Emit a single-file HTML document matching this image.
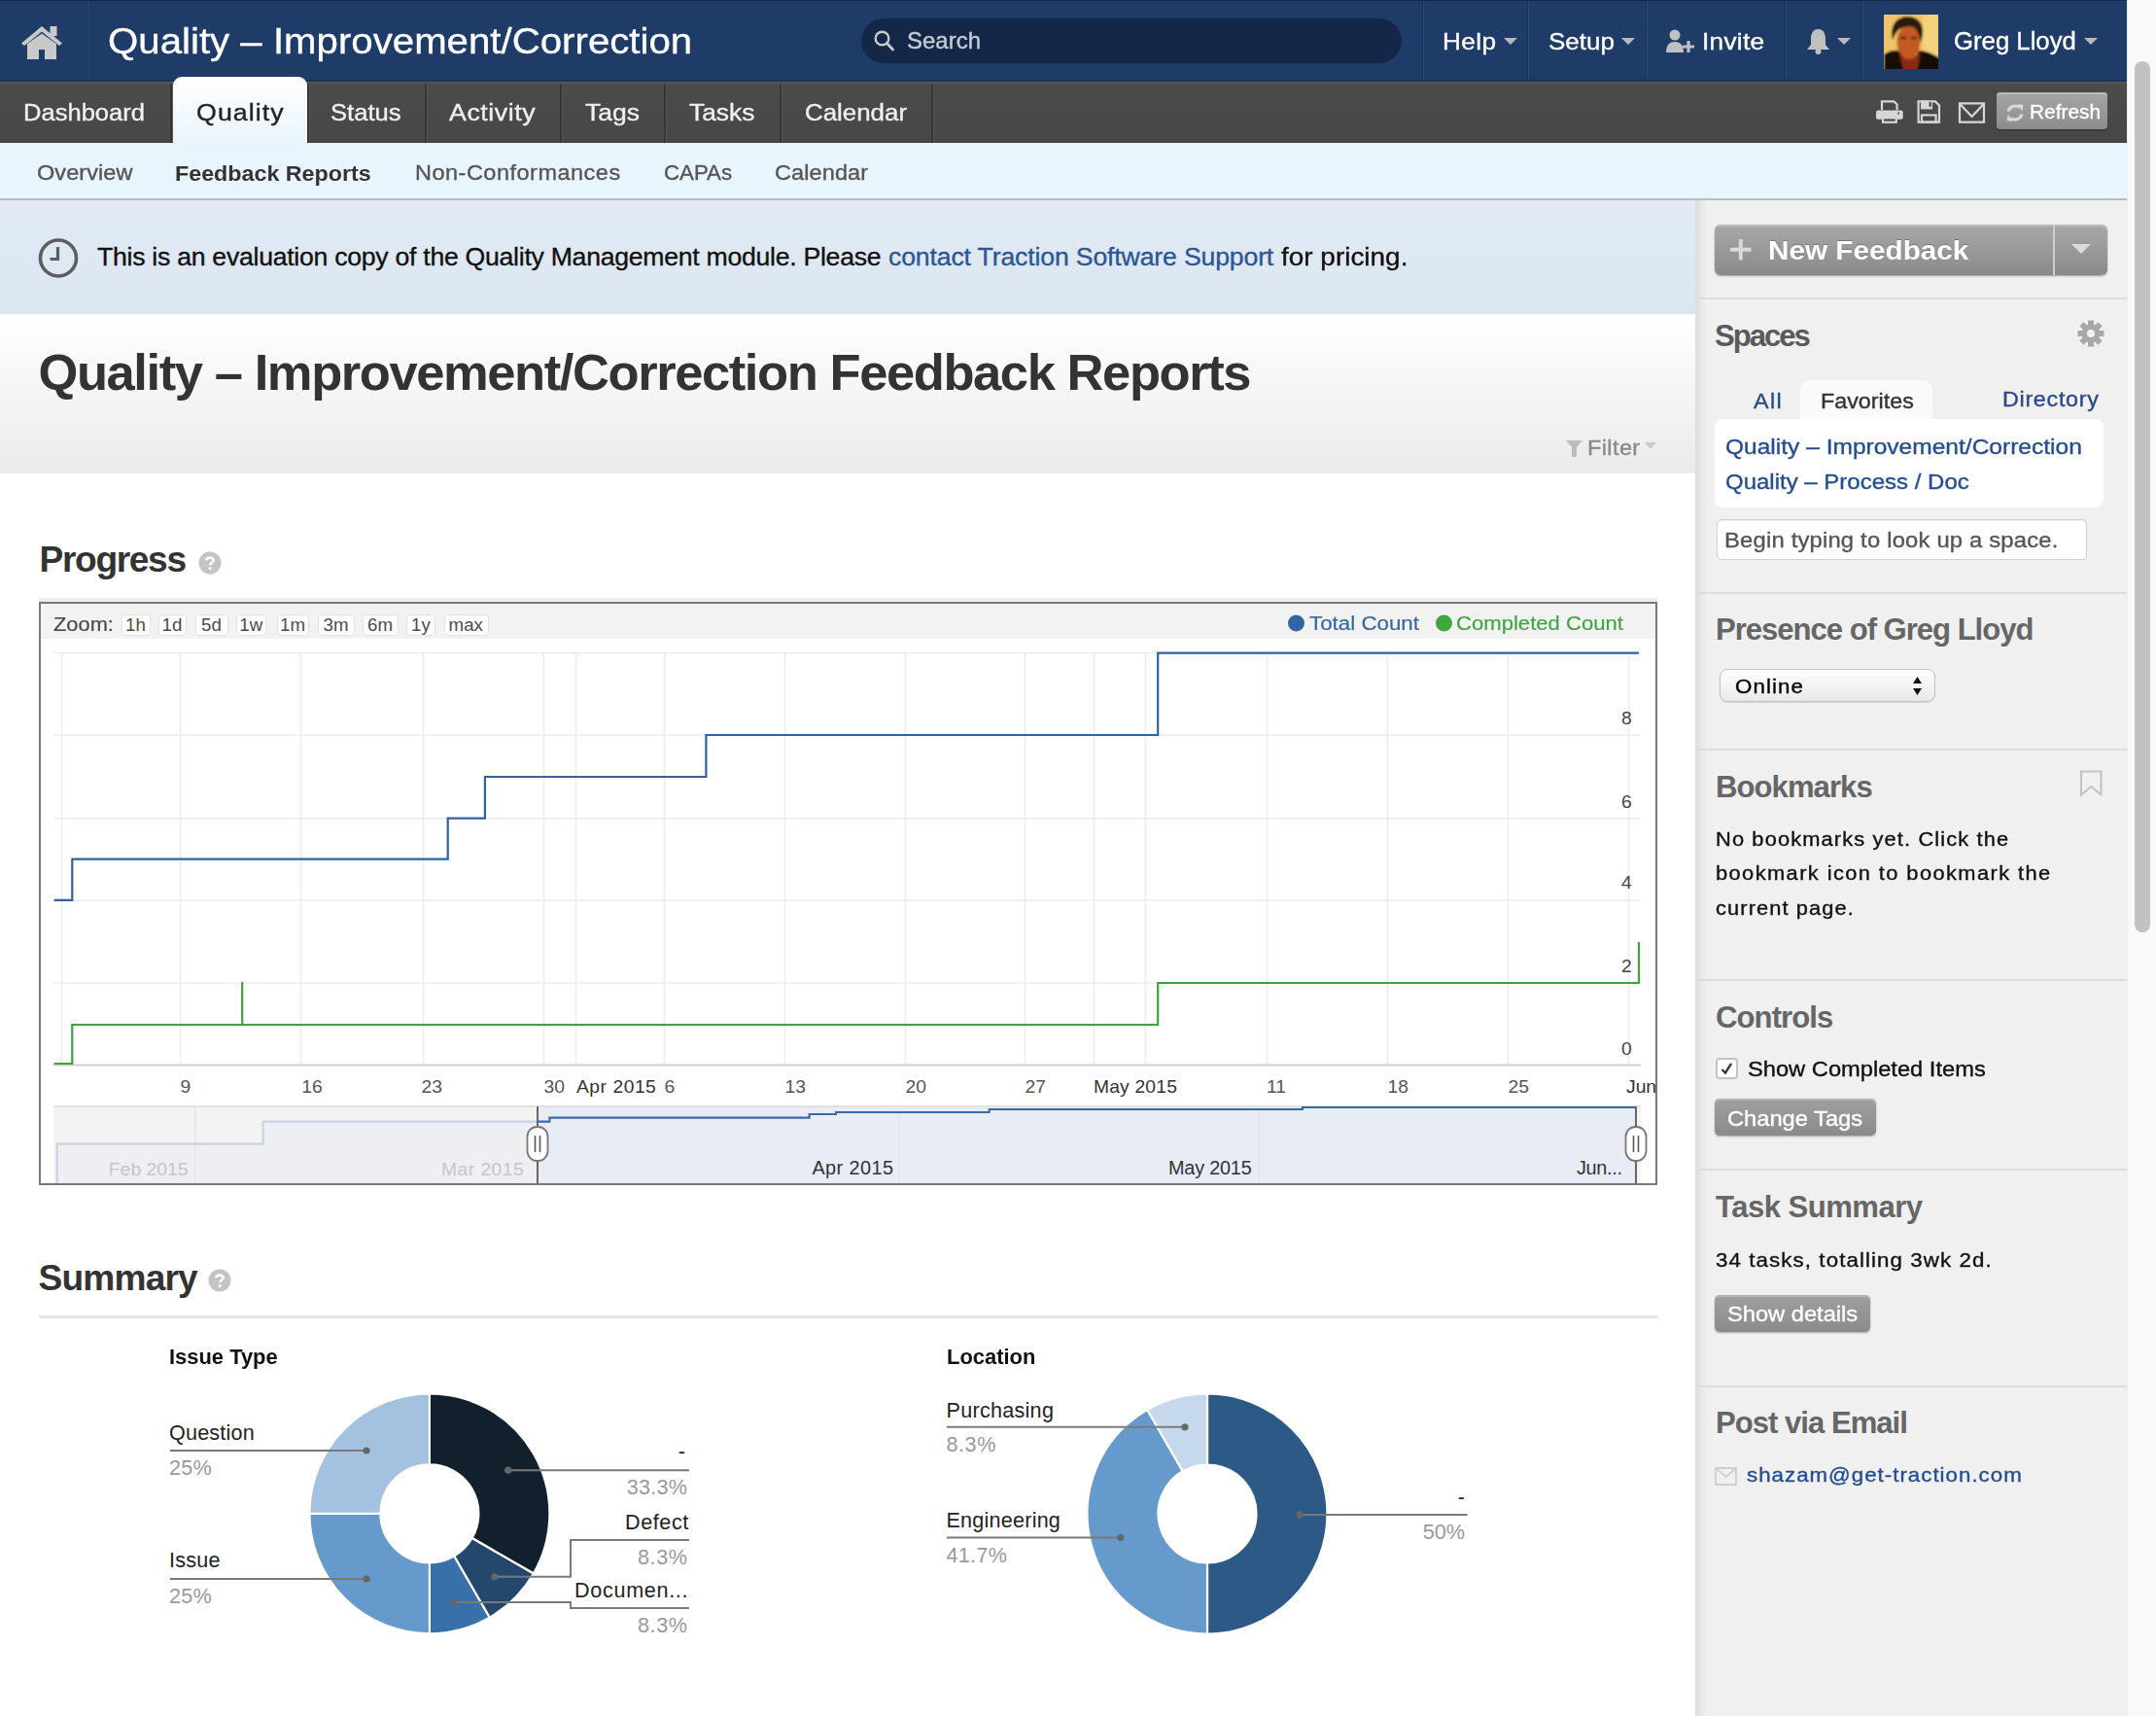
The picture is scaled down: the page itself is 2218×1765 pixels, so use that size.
<!DOCTYPE html><html><head><meta charset="utf-8"><style>
html,body{margin:0;padding:0}
body{width:2218px;height:1765px;overflow:hidden;position:relative;background:#fff;font-family:"Liberation Sans",sans-serif}
.t{position:absolute;white-space:nowrap;-webkit-text-stroke:0.35px currentColor}
.b{-webkit-text-stroke:0}
.r{position:absolute}
svg{position:absolute}
</style></head><body>
<div class="r" style="left:2188px;top:0px;width:30px;height:1765px;background:#f9f9f9;border-left:1px solid #ececec;box-sizing:border-box"></div>
<div class="r" style="left:2196px;top:63px;width:16px;height:896px;background:#c2c2c2;border-radius:8px"></div>
<div class="r" style="left:0px;top:0px;width:2188px;height:84px;background:#1f3c69;border-top:1px solid #13284a;border-bottom:2px solid #1a3359;box-sizing:border-box"></div>
<div class="r" style="left:89px;top:2px;width:1px;height:80px;background:#18305a"></div>
<div class="r" style="left:90px;top:2px;width:1px;height:80px;background:#2a4c80"></div>
<div class="r" style="left:1463px;top:2px;width:1px;height:80px;background:#18305a"></div>
<div class="r" style="left:1464px;top:2px;width:1px;height:80px;background:#2a4c80"></div>
<div class="r" style="left:1571px;top:2px;width:1px;height:80px;background:#18305a"></div>
<div class="r" style="left:1572px;top:2px;width:1px;height:80px;background:#2a4c80"></div>
<div class="r" style="left:1693px;top:2px;width:1px;height:80px;background:#18305a"></div>
<div class="r" style="left:1694px;top:2px;width:1px;height:80px;background:#2a4c80"></div>
<div class="r" style="left:1836px;top:2px;width:1px;height:80px;background:#18305a"></div>
<div class="r" style="left:1837px;top:2px;width:1px;height:80px;background:#2a4c80"></div>
<div class="r" style="left:1915px;top:2px;width:1px;height:80px;background:#18305a"></div>
<div class="r" style="left:1916px;top:2px;width:1px;height:80px;background:#2a4c80"></div>
<svg style="left:0;top:0" width="100" height="84" viewBox="0 0 100 84">
<path d="M22 44.5 L43 27 L64 44.5 L61 47 L43 32.5 L25 47 Z" fill="#c9c9c9"/>
<rect x="51.5" y="27" width="7" height="10" fill="#c9c9c9"/>
<path d="M28 45 L43 34.5 L58 45 L58 61 L46 61 L46 51 L40 51 L40 61 L28 61 Z" fill="#c9c9c9"/>
</svg>
<div class="t" style="left:111.0px;top:24.7px;font-size:36.52px;line-height:36.52px;letter-spacing:0.02px;color:#fff;transform:scaleX(1.1000);transform-origin:0 0;">Quality – Improvement/Correction</div>
<div class="r" style="left:886px;top:19px;width:556px;height:46px;background:#152748;border-radius:23px"></div>
<svg style="left:890px;top:25px" width="40" height="40" viewBox="0 0 40 40">
<circle cx="17.5" cy="14.5" r="6.8" fill="none" stroke="#c8c8c8" stroke-width="2.4"/>
<path d="M22.5 19.5 L28.5 26" stroke="#c8c8c8" stroke-width="2.8" stroke-linecap="round"/>
</svg>
<div class="t" style="left:933.0px;top:31.2px;font-size:22.99px;line-height:22.99px;letter-spacing:0.00px;color:#c7cdd6;transform:scaleX(1.0432);transform-origin:0 0;">Search</div>
<div class="t" style="left:1484.0px;top:31.0px;font-size:23.80px;line-height:23.80px;letter-spacing:0.35px;color:#fff;transform:scaleX(1.1000);transform-origin:0 0;">Help</div>
<div class="t" style="left:1593.0px;top:31.0px;font-size:23.80px;line-height:23.80px;letter-spacing:0.00px;color:#fff;transform:scaleX(1.0932);transform-origin:0 0;">Setup</div>
<div class="t" style="left:1751.0px;top:31.0px;font-size:23.80px;line-height:23.80px;letter-spacing:0.26px;color:#fff;transform:scaleX(1.1000);transform-origin:0 0;">Invite</div>
<div class="t" style="left:2010.0px;top:29.8px;font-size:25.43px;line-height:25.43px;letter-spacing:0.00px;color:#fff;transform:scaleX(1.0120);transform-origin:0 0;">Greg Lloyd</div>
<svg style="left:1547px;top:39px" width="14" height="7" viewBox="0 0 14 7"><path d="M0 0 L14 0 L7.0 7 Z" fill="#b9b9b9"/></svg>
<svg style="left:1668px;top:39px" width="14" height="7" viewBox="0 0 14 7"><path d="M0 0 L14 0 L7.0 7 Z" fill="#b9b9b9"/></svg>
<svg style="left:1890px;top:39px" width="14" height="7" viewBox="0 0 14 7"><path d="M0 0 L14 0 L7.0 7 Z" fill="#b9b9b9"/></svg>
<svg style="left:2144px;top:39px" width="14" height="7" viewBox="0 0 14 7"><path d="M0 0 L14 0 L7.0 7 Z" fill="#b9b9b9"/></svg>
<svg style="left:1712px;top:28px" width="34" height="28" viewBox="0 0 34 28">
<circle cx="11" cy="8" r="5.5" fill="#c0c0c0"/>
<path d="M2 26 C2 18 6 15 11 15 C16 15 20 18 20 26 Z" fill="#c0c0c0"/>
<path d="M19 20 L31 20 M25 14 L25 26" stroke="#c0c0c0" stroke-width="3.2"/>
</svg>
<svg style="left:1856px;top:28px" width="30" height="30" viewBox="0 0 30 30">
<path d="M14.5 2 C9 2 7 7 7 12 L7 18 L3 23 L26 23 L22 18 L22 12 C22 7 20 2 14.5 2 Z" fill="#c0c0c0"/>
<circle cx="14.5" cy="25" r="3" fill="#c0c0c0"/>
</svg>
<svg style="left:1938px;top:15px" width="56" height="56" viewBox="0 0 56 56">
<defs><filter id="bl" x="0" y="0" width="1" height="1"><feGaussianBlur stdDeviation="0.9"/></filter>
<clipPath id="avc"><rect width="56" height="56"/></clipPath></defs>
<rect width="56" height="56" fill="#efc367"/>
<g filter="url(#bl)" clip-path="url(#avc)">
<rect x="-4" y="-4" width="64" height="64" fill="#efc367"/>
<rect x="40" y="0" width="20" height="56" fill="#f5d27c"/>
<rect x="18" y="34" width="15" height="14" fill="#b2481c"/>
<ellipse cx="25.5" cy="28" rx="12" ry="17" fill="#c25a22"/>
<path d="M9 26 C6 12 12 3 23 2 C33 1.5 39 7 40 15 C40.5 20 39.5 24 38 28 C36 20 34 14 29 12.5 C24 11.5 18 13 15 16 C12 19 10.5 23 9 26 Z" fill="#2c1a0c"/>
<path d="M17 24 h6 M28 24 h6" stroke="#5a2a12" stroke-width="2.5"/>
<path d="M0 60 V41 C5 37 11 36 15 37 L21 46 L32 46 L36 37 C43 37 50 40 60 46 V60 Z" fill="#140a05"/>
<path d="M15 37 L21 60 L34 60 L38 38 L32 46 L21 46 Z" fill="#8c2c16"/>
</g>
</svg>
<div class="r" style="left:0px;top:84px;width:2188px;height:63px;background:linear-gradient(#5a5a5a 0,#4b4b4b 3px,#474747 100%)"></div>
<div class="r" style="left:175px;top:86px;width:2px;height:61px;background:#363636"></div>
<div class="r" style="left:177px;top:86px;width:1px;height:61px;background:#555555"></div>
<div class="r" style="left:316px;top:86px;width:2px;height:61px;background:#363636"></div>
<div class="r" style="left:318px;top:86px;width:1px;height:61px;background:#555555"></div>
<div class="r" style="left:437px;top:86px;width:2px;height:61px;background:#363636"></div>
<div class="r" style="left:439px;top:86px;width:1px;height:61px;background:#555555"></div>
<div class="r" style="left:576px;top:86px;width:2px;height:61px;background:#363636"></div>
<div class="r" style="left:578px;top:86px;width:1px;height:61px;background:#555555"></div>
<div class="r" style="left:683px;top:86px;width:2px;height:61px;background:#363636"></div>
<div class="r" style="left:685px;top:86px;width:1px;height:61px;background:#555555"></div>
<div class="r" style="left:802px;top:86px;width:2px;height:61px;background:#363636"></div>
<div class="r" style="left:804px;top:86px;width:1px;height:61px;background:#555555"></div>
<div class="r" style="left:958px;top:86px;width:2px;height:61px;background:#363636"></div>
<div class="r" style="left:960px;top:86px;width:1px;height:61px;background:#555555"></div>
<div class="r" style="left:178px;top:79px;width:138px;height:68px;background:linear-gradient(#ffffff,#eaf5fd);border-radius:9px 9px 0 0"></div>
<div class="t" style="left:24.0px;top:104.1px;font-size:24.35px;line-height:24.35px;letter-spacing:0.00px;color:#f0f0f0;transform:scaleX(1.0495);transform-origin:0 0;">Dashboard</div>
<div class="t" style="left:201.6px;top:104.1px;font-size:24.35px;line-height:24.35px;letter-spacing:0.97px;color:#222;transform:scaleX(1.1000);transform-origin:0 0;">Quality</div>
<div class="t" style="left:340.4px;top:104.1px;font-size:24.35px;line-height:24.35px;letter-spacing:0.00px;color:#f0f0f0;transform:scaleX(1.0514);transform-origin:0 0;">Status</div>
<div class="t" style="left:462.4px;top:104.1px;font-size:24.35px;line-height:24.35px;letter-spacing:0.49px;color:#f0f0f0;transform:scaleX(1.1000);transform-origin:0 0;">Activity</div>
<div class="t" style="left:601.5px;top:104.1px;font-size:24.35px;line-height:24.35px;letter-spacing:0.00px;color:#f0f0f0;transform:scaleX(1.0884);transform-origin:0 0;">Tags</div>
<div class="t" style="left:708.6px;top:104.1px;font-size:24.35px;line-height:24.35px;letter-spacing:-0.00px;color:#f0f0f0;transform:scaleX(1.0827);transform-origin:0 0;">Tasks</div>
<div class="t" style="left:828.0px;top:104.1px;font-size:24.35px;line-height:24.35px;letter-spacing:0.00px;color:#f0f0f0;transform:scaleX(1.0628);transform-origin:0 0;">Calendar</div>
<svg style="left:1926px;top:98px" width="124" height="34" viewBox="0 0 124 34">
<g fill="none" stroke="#d6d6d6" stroke-width="2.2">
<path d="M10 15 V6.4 H22.5 L25.6 9.5 V15"/>
<path d="M47.6 6.4 H65 L69 10.4 V27.6 H47.6 Z"/>
<rect x="51" y="20.4" width="14.6" height="7.2"/>
<path d="M90 8.4 H115 V27.6 H90 Z"/>
<path d="M90.5 9.2 L102.6 22 L114.5 9.2"/>
</g>
<rect x="4" y="15.4" width="27.7" height="9.4" rx="2" fill="#d6d6d6"/>
<circle cx="27" cy="18.6" r="1.1" fill="#555"/>
<rect x="11" y="23.3" width="13.8" height="4.4" fill="#474747" stroke="#d6d6d6" stroke-width="2.2"/>
<rect x="50" y="5.3" width="12" height="9.1" fill="#d6d6d6"/>
<rect x="58.6" y="6.8" width="2.2" height="5" fill="#474747"/>
</svg>
<div class="r" style="left:2054px;top:95px;width:114px;height:38px;background:linear-gradient(#a6a6a6,#8c8c8c);border-radius:4px;box-shadow:inset 0 2px 0 #b9b9b9,0 1px 1px rgba(0,0,0,0.35)"></div>
<svg style="left:2062px;top:105px" width="22" height="22" viewBox="0 0 22 22">
<g fill="none" stroke="#dadada" stroke-width="3"><path d="M4.2 9.5 A7 6.5 0 0 1 15.5 5.5"/><path d="M17.8 12.5 A7 6.5 0 0 1 6.5 16.5"/></g>
<path d="M13.5 2 L19.5 3 L18.2 9.5 Z M8.5 20 L2.5 19 L3.8 12.5 Z" fill="#dadada"/></svg>
<div class="t" style="left:2087.8px;top:105.2px;font-size:20.83px;line-height:20.83px;letter-spacing:0.00px;color:#fff;transform:scaleX(1.0027);transform-origin:0 0;">Refresh</div>
<div class="r" style="left:0px;top:147px;width:2188px;height:59px;background:#e9f5fd;border-bottom:2px solid #b9bcbf;box-sizing:border-box"></div>
<div class="t" style="left:37.6px;top:168.4px;font-size:21.37px;line-height:21.37px;letter-spacing:0.06px;color:#555;transform:scaleX(1.1000);transform-origin:0 0;">Overview</div>
<div class="t" style="left:180.0px;top:167.3px;font-size:22.73px;line-height:22.73px;letter-spacing:0.00px;color:#333;transform:scaleX(1.0241);transform-origin:0 0;font-weight:bold;-webkit-text-stroke:0;">Feedback Reports</div>
<div class="t" style="left:427.0px;top:168.4px;font-size:21.37px;line-height:21.37px;letter-spacing:0.45px;color:#555;transform:scaleX(1.1000);transform-origin:0 0;">Non-Conformances</div>
<div class="t" style="left:683.0px;top:168.4px;font-size:21.37px;line-height:21.37px;letter-spacing:0.00px;color:#555;transform:scaleX(1.0409);transform-origin:0 0;">CAPAs</div>
<div class="t" style="left:797.0px;top:168.4px;font-size:21.37px;line-height:21.37px;letter-spacing:0.09px;color:#555;transform:scaleX(1.1000);transform-origin:0 0;">Calendar</div>
<div class="r" style="left:0px;top:206px;width:1744px;height:117px;background:linear-gradient(#e2ebf5,#dce6f0)"></div>
<svg style="left:36px;top:242px" width="48" height="48" viewBox="0 0 48 48">
<circle cx="24" cy="23.5" r="18.5" fill="none" stroke="#5e5e5e" stroke-width="3.6"/>
<path d="M23.5 12 L23.5 24.5 L15.5 24.5" fill="none" stroke="#5e5e5e" stroke-width="3.2"/>
</svg>
<div class="t" style="left:100.0px;top:251.1px;font-size:26.64px;line-height:26.64px;letter-spacing:-0.27px;color:#111;">This is an evaluation copy of the Quality Management module. Please</div>
<div class="t" style="left:914.0px;top:251.1px;font-size:26.64px;line-height:26.64px;letter-spacing:-0.15px;color:#2a5596;">contact Traction Software Support</div>
<div class="t" style="left:1317.5px;top:251.1px;font-size:26.64px;line-height:26.64px;letter-spacing:0.00px;color:#111;transform:scaleX(1.0490);transform-origin:0 0;">for pricing.</div>
<div class="r" style="left:0px;top:323px;width:1744px;height:164px;background:linear-gradient(#ffffff 0%,#ebebeb 100%)"></div>
<div class="t" style="left:39.5px;top:357.2px;font-size:52.52px;line-height:52.52px;letter-spacing:-1.42px;color:#333;font-weight:bold;-webkit-text-stroke:0;">Quality – Improvement/Correction Feedback Reports</div>
<svg style="left:1610px;top:452px" width="20" height="20" viewBox="0 0 20 20"><path d="M1 1 L18 1 L12 8 L12 18 L7 18 L7 8 Z" fill="#bdbdbd"/></svg>
<div class="t" style="left:1632.8px;top:450.7px;font-size:21.37px;line-height:21.37px;letter-spacing:0.36px;color:#8a8a8a;transform:scaleX(1.1000);transform-origin:0 0;">Filter</div>
<svg style="left:1692px;top:455px" width="12" height="7" viewBox="0 0 12 7"><path d="M0 0 L12 0 L6.0 7 Z" fill="#c9c9c9"/></svg>
<div class="t" style="left:40.6px;top:557.4px;font-size:37.12px;line-height:37.12px;letter-spacing:-1.35px;color:#333;font-weight:bold;-webkit-text-stroke:0;">Progress</div>
<svg style="left:204px;top:567px" width="24" height="24" viewBox="0 0 24 24"><circle cx="12" cy="12" r="11.5" fill="#c4c4c4"/>
<path d="M8.3 9.2 C8.3 5.8 15.7 5.6 15.7 9.3 C15.7 11.6 12.2 11.9 12.2 14.2" fill="none" stroke="#fff" stroke-width="2.6"/><circle cx="12.2" cy="17.6" r="1.6" fill="#fff"/></svg>
<div class="r" style="left:40px;top:615px;width:1665px;height:4px;background:#ececec"></div>
<div class="r" style="left:40px;top:619px;width:1665px;height:600px;border:2px solid #787878;background:#fff;box-sizing:border-box"></div>
<div class="r" style="left:42px;top:621px;width:1661px;height:36px;background:#f2f2f2"></div>
<div class="t" style="left:55.3px;top:631.6px;font-size:20.56px;line-height:20.56px;letter-spacing:0.00px;color:#4a4a4a;transform:scaleX(1.0627);transform-origin:0 0;-webkit-text-stroke:0.2px;">Zoom:</div>
<div class="r" style="left:125px;top:632px;width:30px;height:22px;background:#fff;border:1px solid #e2e2e2;border-radius:4px;box-sizing:border-box"></div>
<div class="t" style="left:129.1px;top:633.5px;font-size:18.71px;line-height:18.71px;letter-spacing:0.00px;color:#4a4a4a;-webkit-text-stroke:0;">1h</div>
<div class="r" style="left:163px;top:632px;width:29px;height:22px;background:#fff;border:1px solid #e2e2e2;border-radius:4px;box-sizing:border-box"></div>
<div class="t" style="left:166.6px;top:633.5px;font-size:18.71px;line-height:18.71px;letter-spacing:0.00px;color:#4a4a4a;-webkit-text-stroke:0;">1d</div>
<div class="r" style="left:201px;top:632px;width:34px;height:22px;background:#fff;border:1px solid #e2e2e2;border-radius:4px;box-sizing:border-box"></div>
<div class="t" style="left:207.1px;top:633.5px;font-size:18.71px;line-height:18.71px;letter-spacing:0.00px;color:#4a4a4a;-webkit-text-stroke:0;">5d</div>
<div class="r" style="left:243px;top:632px;width:31px;height:22px;background:#fff;border:1px solid #e2e2e2;border-radius:4px;box-sizing:border-box"></div>
<div class="t" style="left:246.3px;top:633.5px;font-size:18.71px;line-height:18.71px;letter-spacing:0.00px;color:#4a4a4a;-webkit-text-stroke:0;">1w</div>
<div class="r" style="left:285px;top:632px;width:33px;height:22px;background:#fff;border:1px solid #e2e2e2;border-radius:4px;box-sizing:border-box"></div>
<div class="t" style="left:288.0px;top:633.5px;font-size:18.71px;line-height:18.71px;letter-spacing:0.00px;color:#4a4a4a;-webkit-text-stroke:0;">1m</div>
<div class="r" style="left:327px;top:632px;width:38px;height:22px;background:#fff;border:1px solid #e2e2e2;border-radius:4px;box-sizing:border-box"></div>
<div class="t" style="left:332.5px;top:633.5px;font-size:18.71px;line-height:18.71px;letter-spacing:0.00px;color:#4a4a4a;-webkit-text-stroke:0;">3m</div>
<div class="r" style="left:373px;top:632px;width:37px;height:22px;background:#fff;border:1px solid #e2e2e2;border-radius:4px;box-sizing:border-box"></div>
<div class="t" style="left:378.0px;top:633.5px;font-size:18.71px;line-height:18.71px;letter-spacing:0.00px;color:#4a4a4a;-webkit-text-stroke:0;">6m</div>
<div class="r" style="left:418px;top:632px;width:30px;height:22px;background:#fff;border:1px solid #e2e2e2;border-radius:4px;box-sizing:border-box"></div>
<div class="t" style="left:423.0px;top:633.5px;font-size:18.71px;line-height:18.71px;letter-spacing:0.00px;color:#4a4a4a;-webkit-text-stroke:0;">1y</div>
<div class="r" style="left:457px;top:632px;width:46px;height:22px;background:#fff;border:1px solid #e2e2e2;border-radius:4px;box-sizing:border-box"></div>
<div class="t" style="left:461.6px;top:633.5px;font-size:18.71px;line-height:18.71px;letter-spacing:0.00px;color:#4a4a4a;-webkit-text-stroke:0;">max</div>
<svg style="left:1320px;top:628px" width="190" height="26"><circle cx="13.5" cy="13" r="8.5" fill="#2f66a3"/><circle cx="165.5" cy="13" r="8.5" fill="#3da63d"/></svg>
<div class="t" style="left:1347.0px;top:630.6px;font-size:20.56px;line-height:20.56px;letter-spacing:0.00px;color:#2f66a3;transform:scaleX(1.0871);transform-origin:0 0;-webkit-text-stroke:0.15px;">Total Count</div>
<div class="t" style="left:1498.0px;top:630.6px;font-size:20.56px;line-height:20.56px;letter-spacing:-0.00px;color:#3da63d;transform:scaleX(1.0757);transform-origin:0 0;-webkit-text-stroke:0.15px;">Completed Count</div>
<svg style="left:0;top:0" width="1744" height="1230" viewBox="0 0 1744 1230">
<line x1="63.5" y1="671" x2="63.5" y2="1095" stroke="#ececec" stroke-width="1.5"/>
<line x1="185.5" y1="671" x2="185.5" y2="1095" stroke="#ececec" stroke-width="1.5"/>
<line x1="309.5" y1="671" x2="309.5" y2="1095" stroke="#ececec" stroke-width="1.5"/>
<line x1="435.5" y1="671" x2="435.5" y2="1095" stroke="#ececec" stroke-width="1.5"/>
<line x1="559.5" y1="671" x2="559.5" y2="1095" stroke="#ececec" stroke-width="1.5"/>
<line x1="592.5" y1="671" x2="592.5" y2="1095" stroke="#ececec" stroke-width="1.5"/>
<line x1="683.5" y1="671" x2="683.5" y2="1095" stroke="#ececec" stroke-width="1.5"/>
<line x1="807.5" y1="671" x2="807.5" y2="1095" stroke="#ececec" stroke-width="1.5"/>
<line x1="931.5" y1="671" x2="931.5" y2="1095" stroke="#ececec" stroke-width="1.5"/>
<line x1="1054.5" y1="671" x2="1054.5" y2="1095" stroke="#ececec" stroke-width="1.5"/>
<line x1="1125.5" y1="671" x2="1125.5" y2="1095" stroke="#ececec" stroke-width="1.5"/>
<line x1="1178.5" y1="671" x2="1178.5" y2="1095" stroke="#ececec" stroke-width="1.5"/>
<line x1="1303.5" y1="671" x2="1303.5" y2="1095" stroke="#ececec" stroke-width="1.5"/>
<line x1="1427.5" y1="671" x2="1427.5" y2="1095" stroke="#ececec" stroke-width="1.5"/>
<line x1="1551.5" y1="671" x2="1551.5" y2="1095" stroke="#ececec" stroke-width="1.5"/>
<line x1="1675.5" y1="671" x2="1675.5" y2="1095" stroke="#ececec" stroke-width="1.5"/>
<line x1="55" y1="671.5" x2="1688" y2="671.5" stroke="#ececec" stroke-width="1.5"/>
<line x1="55" y1="756" x2="1688" y2="756" stroke="#ececec" stroke-width="1.5"/>
<line x1="55" y1="841.7" x2="1688" y2="841.7" stroke="#ececec" stroke-width="1.5"/>
<line x1="55" y1="926" x2="1688" y2="926" stroke="#ececec" stroke-width="1.5"/>
<line x1="55" y1="1011" x2="1688" y2="1011" stroke="#ececec" stroke-width="1.5"/>
<line x1="55" y1="1095.5" x2="1688" y2="1095.5" stroke="#d2d2d2" stroke-width="2"/>
<path d="M55.6 925.8 H74.3 V883.7 H460.7 V841.7 H498.9 V799 H726.4 V756 H1191.2 V671.6 H1686" fill="none" stroke="#2f62a0" stroke-width="2.2"/>
<path d="M55.6 1094 H74.3 V1054 H249.2 V1010 V1054 H1191.2 V1011 H1686 V969" fill="none" stroke="#3fa140" stroke-width="2.2"/>
<rect x="55" y="1138" width="1633" height="79" fill="#f3f3f3"/>
<path d="M58.7 1217 V1176.7 H270.6 V1153.7 H553 V1217 Z" fill="#eeeff2"/>
<rect x="553" y="1138" width="1130" height="79" fill="#e8ecf5"/>
<line x1="201" y1="1138" x2="201" y2="1217" stroke="#e4e4e4" stroke-width="1.5"/>
<line x1="925" y1="1138" x2="925" y2="1217" stroke="#e4e4e4" stroke-width="1.5"/>
<line x1="1295" y1="1138" x2="1295" y2="1217" stroke="#e4e4e4" stroke-width="1.5"/>
<line x1="55" y1="1138" x2="1688" y2="1138" stroke="#e2e2e2" stroke-width="2"/>
<path d="M58.7 1217 V1176.7 H270.6 V1153.7 H553" fill="none" stroke="#c8d3e2" stroke-width="2.2"/>
<path d="M553 1153.7 H565.4 V1149.6 H832.6 V1146 H860 V1144 H1017.7 V1141 H1340 V1139 H1683" fill="none" stroke="#3a6aa6" stroke-width="2.2"/>
<line x1="553" y1="1138" x2="553" y2="1217" stroke="#666" stroke-width="2"/>
<line x1="1683" y1="1138" x2="1683" y2="1217" stroke="#666" stroke-width="2"/>
<rect x="542.5" y="1159" width="21" height="35" rx="10" fill="#fff" stroke="#777" stroke-width="1.8"/>
<line x1="550.5" y1="1168" x2="550.5" y2="1185" stroke="#555" stroke-width="1.6"/><line x1="555.5" y1="1168" x2="555.5" y2="1185" stroke="#555" stroke-width="1.6"/>
<rect x="1672.5" y="1159" width="21" height="35" rx="10" fill="#fff" stroke="#777" stroke-width="1.8"/>
<line x1="1680.5" y1="1168" x2="1680.5" y2="1185" stroke="#555" stroke-width="1.6"/><line x1="1685.5" y1="1168" x2="1685.5" y2="1185" stroke="#555" stroke-width="1.6"/>
</svg>
<div class="t" style="left:1668.1px;top:728.9px;font-size:19.28px;line-height:19.28px;letter-spacing:0.00px;color:#444;-webkit-text-stroke:0;">8</div>
<div class="t" style="left:1668.1px;top:815.0px;font-size:19.28px;line-height:19.28px;letter-spacing:0.00px;color:#444;-webkit-text-stroke:0;">6</div>
<div class="t" style="left:1668.1px;top:898.4px;font-size:19.28px;line-height:19.28px;letter-spacing:0.00px;color:#444;-webkit-text-stroke:0;">4</div>
<div class="t" style="left:1668.1px;top:984.4px;font-size:19.28px;line-height:19.28px;letter-spacing:0.00px;color:#444;-webkit-text-stroke:0;">2</div>
<div class="t" style="left:1668.1px;top:1068.9px;font-size:19.28px;line-height:19.28px;letter-spacing:0.00px;color:#444;-webkit-text-stroke:0;">0</div>
<div class="t" style="left:185.4px;top:1108.4px;font-size:19.28px;line-height:19.28px;letter-spacing:0.00px;color:#555;-webkit-text-stroke:0;">9</div>
<div class="t" style="left:310.3px;top:1108.4px;font-size:19.28px;line-height:19.28px;letter-spacing:0.00px;color:#555;-webkit-text-stroke:0;">16</div>
<div class="t" style="left:433.5px;top:1108.4px;font-size:19.28px;line-height:19.28px;letter-spacing:0.00px;color:#555;-webkit-text-stroke:0;">23</div>
<div class="t" style="left:559.5px;top:1108.4px;font-size:19.28px;line-height:19.28px;letter-spacing:0.00px;color:#555;-webkit-text-stroke:0;">30</div>
<div class="t" style="left:683.5px;top:1108.4px;font-size:19.28px;line-height:19.28px;letter-spacing:0.00px;color:#555;-webkit-text-stroke:0;">6</div>
<div class="t" style="left:807.5px;top:1108.4px;font-size:19.28px;line-height:19.28px;letter-spacing:0.00px;color:#555;-webkit-text-stroke:0;">13</div>
<div class="t" style="left:931.5px;top:1108.4px;font-size:19.28px;line-height:19.28px;letter-spacing:0.00px;color:#555;-webkit-text-stroke:0;">20</div>
<div class="t" style="left:1054.5px;top:1108.4px;font-size:19.28px;line-height:19.28px;letter-spacing:0.00px;color:#555;-webkit-text-stroke:0;">27</div>
<div class="t" style="left:1303.0px;top:1108.4px;font-size:19.28px;line-height:19.28px;letter-spacing:0.00px;color:#555;-webkit-text-stroke:0;">11</div>
<div class="t" style="left:1427.5px;top:1108.4px;font-size:19.28px;line-height:19.28px;letter-spacing:0.00px;color:#555;-webkit-text-stroke:0;">18</div>
<div class="t" style="left:1551.5px;top:1108.4px;font-size:19.28px;line-height:19.28px;letter-spacing:0.00px;color:#555;-webkit-text-stroke:0;">25</div>
<div class="t" style="left:593.0px;top:1108.4px;font-size:19.28px;line-height:19.28px;letter-spacing:0.52px;color:#333;-webkit-text-stroke:0;">Apr 2015</div>
<div class="t" style="left:1125.0px;top:1108.4px;font-size:19.28px;line-height:19.28px;letter-spacing:0.18px;color:#333;-webkit-text-stroke:0;">May 2015</div>
<div class="t" style="left:1673.0px;top:1108.4px;font-size:19.28px;line-height:19.28px;letter-spacing:0.00px;color:#333;-webkit-text-stroke:0;">Jun</div>
<div class="t" style="left:111.8px;top:1192.6px;font-size:19.28px;line-height:19.28px;letter-spacing:0.05px;color:#c6c6c6;-webkit-text-stroke:0;">Feb 2015</div>
<div class="t" style="left:453.9px;top:1192.6px;font-size:19.28px;line-height:19.28px;letter-spacing:0.49px;color:#c6c6c6;-webkit-text-stroke:0;">Mar 2015</div>
<div class="t" style="left:835.4px;top:1192.1px;font-size:19.86px;line-height:19.86px;letter-spacing:0.44px;color:#333;-webkit-text-stroke:0;">Apr 2015</div>
<div class="t" style="left:1202.0px;top:1192.1px;font-size:19.86px;line-height:19.86px;letter-spacing:-0.22px;color:#333;-webkit-text-stroke:0;">May 2015</div>
<div class="t" style="left:1622.0px;top:1192.1px;font-size:19.86px;line-height:19.86px;letter-spacing:-0.31px;color:#333;-webkit-text-stroke:0;">Jun...</div>
<div class="t" style="left:39.5px;top:1295.6px;font-size:37.12px;line-height:37.12px;letter-spacing:-0.82px;color:#333;font-weight:bold;-webkit-text-stroke:0;">Summary</div>
<svg style="left:214px;top:1305px" width="24" height="24" viewBox="0 0 24 24"><circle cx="12" cy="12" r="11.5" fill="#c4c4c4"/>
<path d="M8.3 9.2 C8.3 5.8 15.7 5.6 15.7 9.3 C15.7 11.6 12.2 11.9 12.2 14.2" fill="none" stroke="#fff" stroke-width="2.6"/><circle cx="12.2" cy="17.6" r="1.6" fill="#fff"/></svg>
<div class="r" style="left:40px;top:1353px;width:1665px;height:3px;background:#e6e6e6"></div>
<svg style="left:0;top:0" width="1744" height="1765" viewBox="0 0 1744 1765">
<path d="M441.90 1433.30 A123.5 123.5 0 0 1 548.85 1618.55 L485.63 1582.05 A50.5 50.5 0 0 0 441.90 1506.30 Z" fill="#12202e" stroke="#fff" stroke-width="2.2" stroke-linejoin="round"/>
<path d="M548.85 1618.55 A123.5 123.5 0 0 1 503.65 1663.75 L467.15 1600.53 A50.5 50.5 0 0 0 485.63 1582.05 Z" fill="#24476e" stroke="#fff" stroke-width="2.2" stroke-linejoin="round"/>
<path d="M503.65 1663.75 A123.5 123.5 0 0 1 441.90 1680.30 L441.90 1607.30 A50.5 50.5 0 0 0 467.15 1600.53 Z" fill="#3870aa" stroke="#fff" stroke-width="2.2" stroke-linejoin="round"/>
<path d="M441.90 1680.30 A123.5 123.5 0 0 1 318.40 1556.80 L391.40 1556.80 A50.5 50.5 0 0 0 441.90 1607.30 Z" fill="#6699cc" stroke="#fff" stroke-width="2.2" stroke-linejoin="round"/>
<path d="M318.40 1556.80 A123.5 123.5 0 0 1 441.90 1433.30 L441.90 1506.30 A50.5 50.5 0 0 0 391.40 1556.80 Z" fill="#a4c2e0" stroke="#fff" stroke-width="2.2" stroke-linejoin="round"/>
<g fill="none" stroke="#7a7a7a" stroke-width="2">
<path d="M175 1492 H377"/>
<path d="M175 1624 H377"/>
<path d="M522.7 1512.2 H709"/>
<path d="M508.8 1621.8 H587 V1584 H709"/>
<path d="M466.7 1647.9 H587 V1654 H709"/>
</g>
<g fill="#666">
<circle cx="377" cy="1492" r="3.6"/>
<circle cx="377" cy="1624" r="3.6"/>
<circle cx="522.7" cy="1512.2" r="3.6"/>
<circle cx="508.8" cy="1621.8" r="3.6"/>
<circle cx="466.7" cy="1647.9" r="3.6"/>
</g>
<path d="M1242.00 1433.50 A123.5 123.5 0 0 1 1242.00 1680.50 L1242.00 1607.50 A50.5 50.5 0 0 0 1242.00 1506.50 Z" fill="#2d5986" stroke="#fff" stroke-width="2.2" stroke-linejoin="round"/>
<path d="M1242.00 1680.50 A123.5 123.5 0 0 1 1180.25 1450.05 L1216.75 1513.27 A50.5 50.5 0 0 0 1242.00 1607.50 Z" fill="#6699cc" stroke="#fff" stroke-width="2.2" stroke-linejoin="round"/>
<path d="M1180.25 1450.05 A123.5 123.5 0 0 1 1242.00 1433.50 L1242.00 1506.50 A50.5 50.5 0 0 0 1216.75 1513.27 Z" fill="#c6d9ec" stroke="#fff" stroke-width="2.2" stroke-linejoin="round"/>
<g fill="none" stroke="#7a7a7a" stroke-width="2">
<path d="M974 1467.8 H1219"/>
<path d="M974 1581.5 H1152.8"/>
<path d="M1337 1557.9 H1509.5"/>
</g>
<g fill="#666">
<circle cx="1219" cy="1467.8" r="3.6"/>
<circle cx="1152.8" cy="1581.5" r="3.6"/>
<circle cx="1337" cy="1557.9" r="3.6"/>
</g>
</svg>
<div class="t" style="left:174.0px;top:1384.5px;font-size:21.58px;line-height:21.58px;letter-spacing:0.00px;color:#111;transform:scaleX(1.0159);transform-origin:0 0;font-weight:bold;-webkit-text-stroke:0;">Issue Type</div>
<div class="t" style="left:174.0px;top:1463.1px;font-size:21.58px;line-height:21.58px;letter-spacing:0.19px;color:#222;-webkit-text-stroke:0;">Question</div>
<div class="t" style="left:174.0px;top:1498.7px;font-size:21.58px;line-height:21.58px;letter-spacing:0.28px;color:#999;-webkit-text-stroke:0;">25%</div>
<div class="t" style="left:174.0px;top:1594.2px;font-size:21.58px;line-height:21.58px;letter-spacing:0.24px;color:#222;-webkit-text-stroke:0;">Issue</div>
<div class="t" style="left:174.0px;top:1631.2px;font-size:21.58px;line-height:21.58px;letter-spacing:0.28px;color:#999;-webkit-text-stroke:0;">25%</div>
<div class="t" style="left:697.8px;top:1481.7px;font-size:21.58px;line-height:21.58px;letter-spacing:0.00px;color:#222;-webkit-text-stroke:0;">-</div>
<div class="t" style="left:644.8px;top:1519.1px;font-size:21.58px;line-height:21.58px;letter-spacing:0.24px;color:#999;-webkit-text-stroke:0;">33.3%</div>
<div class="t" style="left:643.0px;top:1554.7px;font-size:21.58px;line-height:21.58px;letter-spacing:0.59px;color:#222;-webkit-text-stroke:0;">Defect</div>
<div class="t" style="left:656.0px;top:1590.7px;font-size:21.58px;line-height:21.58px;letter-spacing:0.58px;color:#999;-webkit-text-stroke:0;">8.3%</div>
<div class="t" style="left:591.0px;top:1624.7px;font-size:21.58px;line-height:21.58px;letter-spacing:0.69px;color:#222;-webkit-text-stroke:0;">Documen...</div>
<div class="t" style="left:656.0px;top:1661.2px;font-size:21.58px;line-height:21.58px;letter-spacing:0.58px;color:#999;-webkit-text-stroke:0;">8.3%</div>
<div class="t" style="left:973.5px;top:1384.7px;font-size:21.58px;line-height:21.58px;letter-spacing:0.00px;color:#111;transform:scaleX(1.0167);transform-origin:0 0;font-weight:bold;-webkit-text-stroke:0;">Location</div>
<div class="t" style="left:973.5px;top:1439.5px;font-size:21.58px;line-height:21.58px;letter-spacing:0.27px;color:#222;-webkit-text-stroke:0;">Purchasing</div>
<div class="t" style="left:973.5px;top:1474.6px;font-size:21.58px;line-height:21.58px;letter-spacing:0.55px;color:#999;-webkit-text-stroke:0;">8.3%</div>
<div class="t" style="left:973.5px;top:1553.1px;font-size:21.58px;line-height:21.58px;letter-spacing:0.22px;color:#222;-webkit-text-stroke:0;">Engineering</div>
<div class="t" style="left:973.5px;top:1588.5px;font-size:21.58px;line-height:21.58px;letter-spacing:0.31px;color:#999;-webkit-text-stroke:0;">41.7%</div>
<div class="t" style="left:1499.8px;top:1528.7px;font-size:21.58px;line-height:21.58px;letter-spacing:0.00px;color:#222;-webkit-text-stroke:0;">-</div>
<div class="t" style="left:1463.8px;top:1564.7px;font-size:21.58px;line-height:21.58px;letter-spacing:0.00px;color:#999;-webkit-text-stroke:0;">50%</div>
<div class="r" style="left:1744px;top:206px;width:444px;height:1559px;background:#f0f0f0"></div>
<div class="r" style="left:1744px;top:206px;width:12px;height:1559px;background:linear-gradient(90deg,#dcdcdc,rgba(240,240,240,0))"></div>
<div class="r" style="left:1744px;top:306px;width:444px;height:2px;background:#dcdcdc"></div>
<div class="r" style="left:1744px;top:609px;width:444px;height:2px;background:#dcdcdc"></div>
<div class="r" style="left:1744px;top:770px;width:444px;height:2px;background:#dcdcdc"></div>
<div class="r" style="left:1744px;top:1007px;width:444px;height:2px;background:#dcdcdc"></div>
<div class="r" style="left:1744px;top:1202px;width:444px;height:2px;background:#dcdcdc"></div>
<div class="r" style="left:1744px;top:1425px;width:444px;height:2px;background:#dcdcdc"></div>
<div class="r" style="left:1764px;top:231px;width:404px;height:52px;background:linear-gradient(#a8a8a8,#8a8a8a);border-radius:6px;box-shadow:inset 0 2px 0 #bababa,0 1px 2px rgba(0,0,0,0.35)"></div>
<div class="r" style="left:2112px;top:231px;width:2px;height:52px;background:#cfcfcf"></div>
<svg style="left:1778px;top:244px" width="26" height="26" viewBox="0 0 26 26"><path d="M10.8 2 H14.7 V10.8 H23.5 V14.7 H14.7 V23.5 H10.8 V14.7 H2 V10.8 H10.8 Z" fill="#d9d9d9"/></svg>
<svg style="left:2131px;top:251px" width="20" height="10" viewBox="0 0 20 10"><path d="M0 0 L20 0 L10.0 10 Z" fill="#dadada"/></svg>
<div class="t" style="left:1818.5px;top:242.6px;font-size:28.20px;line-height:28.20px;letter-spacing:0.00px;color:#fff;transform:scaleX(1.0536);transform-origin:0 0;font-weight:bold;-webkit-text-stroke:0;text-shadow:0 -1px 0 rgba(0,0,0,0.25);">New Feedback</div>
<div class="t" style="left:1764.0px;top:329.7px;font-size:31.08px;line-height:31.08px;letter-spacing:-2.03px;color:#5a5a5a;font-weight:bold;-webkit-text-stroke:0;">Spaces</div>
<svg style="left:2136px;top:328px" width="30" height="30" viewBox="0 0 30 30"><g transform="translate(15 15)" fill="#a8a8a8">
<circle r="9.5"/><g id="teeth"><rect x="-3" y="-13.5" width="6" height="6"/><rect x="-3" y="7.5" width="6" height="6"/><rect x="-13.5" y="-3" width="6" height="6"/><rect x="7.5" y="-3" width="6" height="6"/></g>
<g transform="rotate(45)"><rect x="-3" y="-13.5" width="6" height="6"/><rect x="-3" y="7.5" width="6" height="6"/><rect x="-13.5" y="-3" width="6" height="6"/><rect x="7.5" y="-3" width="6" height="6"/></g>
<circle r="4" fill="#f0f0f0"/></g></svg>
<div class="r" style="left:1852px;top:391px;width:136px;height:41px;background:#fafafa;border-radius:9px 9px 0 0"></div>
<div class="r" style="left:1764px;top:431px;width:400px;height:91px;background:#fff;border-radius:9px"></div>
<div class="t" style="left:1804.0px;top:402.0px;font-size:21.23px;line-height:21.23px;letter-spacing:1.20px;color:#2a4a8a;transform:scaleX(1.1000);transform-origin:0 0;">All</div>
<div class="t" style="left:1873.0px;top:402.0px;font-size:21.23px;line-height:21.23px;letter-spacing:0.00px;color:#333;transform:scaleX(1.0984);transform-origin:0 0;">Favorites</div>
<div class="t" style="left:2060.0px;top:400.0px;font-size:21.23px;line-height:21.23px;letter-spacing:0.62px;color:#2a4a8a;transform:scaleX(1.1000);transform-origin:0 0;">Directory</div>
<div class="t" style="left:1775.0px;top:448.5px;font-size:22.32px;line-height:22.32px;letter-spacing:0.00px;color:#234d92;transform:scaleX(1.0996);transform-origin:0 0;">Quality – Improvement/Correction</div>
<div class="t" style="left:1775.0px;top:484.8px;font-size:22.32px;line-height:22.32px;letter-spacing:0.00px;color:#234d92;transform:scaleX(1.0755);transform-origin:0 0;">Quality – Process / Doc</div>
<div class="r" style="left:1766px;top:534px;width:381px;height:42px;background:#fff;border:1px solid #cfcfcf;border-radius:5px;box-sizing:border-box;box-shadow:inset 0 1px 1px rgba(0,0,0,0.08)"></div>
<div class="t" style="left:1773.7px;top:544.7px;font-size:21.64px;line-height:21.64px;letter-spacing:0.18px;color:#555;transform:scaleX(1.1000);transform-origin:0 0;">Begin typing to look up a space.</div>
<div class="t" style="left:1765.0px;top:632.4px;font-size:31.08px;line-height:31.08px;letter-spacing:-1.02px;color:#666;font-weight:bold;-webkit-text-stroke:0;">Presence of Greg Lloyd</div>
<div class="r" style="left:1769px;top:688px;width:222px;height:34px;background:linear-gradient(#ffffff,#e9e9e9);border:1px solid #c2c2c2;border-radius:8px;box-sizing:border-box;box-shadow:0 1px 1px rgba(0,0,0,0.1)"></div>
<div class="t" style="left:1785.0px;top:695.8px;font-size:20.29px;line-height:20.29px;letter-spacing:0.99px;color:#000;transform:scaleX(1.1000);transform-origin:0 0;">Online</div>
<svg style="left:1966px;top:694px" width="14" height="24" viewBox="0 0 14 24"><path d="M2 9 L6.5 2 L11 9 Z M2 14 L6.5 21 L11 14 Z" fill="#111"/></svg>
<div class="t" style="left:1765.0px;top:793.7px;font-size:31.08px;line-height:31.08px;letter-spacing:-0.95px;color:#666;font-weight:bold;-webkit-text-stroke:0;">Bookmarks</div>
<svg style="left:2139px;top:792px" width="25" height="28" viewBox="0 0 25 28"><path d="M2 1.5 H22.5 V25.5 L12.2 17 L2 25.5 Z" fill="none" stroke="#c2c2c2" stroke-width="2"/></svg>
<div class="t" style="left:1765.0px;top:853.6px;font-size:19.88px;line-height:19.88px;letter-spacing:1.02px;color:#111;transform:scaleX(1.1000);transform-origin:0 0;">No bookmarks yet. Click the</div>
<div class="t" style="left:1765.0px;top:889.2px;font-size:19.88px;line-height:19.88px;letter-spacing:1.28px;color:#111;transform:scaleX(1.1000);transform-origin:0 0;">bookmark icon to bookmark the</div>
<div class="t" style="left:1765.0px;top:924.6px;font-size:19.88px;line-height:19.88px;letter-spacing:1.00px;color:#111;transform:scaleX(1.1000);transform-origin:0 0;">current page.</div>
<div class="t" style="left:1765.0px;top:1030.5px;font-size:31.08px;line-height:31.08px;letter-spacing:-0.92px;color:#666;font-weight:bold;-webkit-text-stroke:0;">Controls</div>
<div class="r" style="left:1765px;top:1088px;width:23px;height:22px;background:#fff;border:2px solid #c4c4c4;border-radius:4px;box-sizing:border-box"></div>
<svg style="left:1765px;top:1088px" width="23" height="22" viewBox="0 0 23 22"><path d="M6.5 12 L10 15.5 L16 6" fill="none" stroke="#3a3a3a" stroke-width="2.4"/></svg>
<div class="t" style="left:1798.0px;top:1088.7px;font-size:21.64px;line-height:21.64px;letter-spacing:0.00px;color:#111;transform:scaleX(1.0947);transform-origin:0 0;">Show Completed Items</div>
<div class="r" style="left:1764px;top:1130px;width:166px;height:38px;background:linear-gradient(#a0a0a0,#8a8a8a);border-radius:5px;box-shadow:inset 0 2px 0 #b4b4b4,0 1px 2px rgba(0,0,0,0.3)"></div>
<div class="t" style="left:1776.7px;top:1140.0px;font-size:22.01px;line-height:22.01px;letter-spacing:0.00px;color:#fff;transform:scaleX(1.0762);transform-origin:0 0;">Change Tags</div>
<div class="t" style="left:1765.0px;top:1225.7px;font-size:31.08px;line-height:31.08px;letter-spacing:-0.52px;color:#666;font-weight:bold;-webkit-text-stroke:0;">Task Summary</div>
<div class="t" style="left:1765.0px;top:1285.5px;font-size:20.29px;line-height:20.29px;letter-spacing:0.99px;color:#111;transform:scaleX(1.1000);transform-origin:0 0;">34 tasks, totalling 3wk 2d.</div>
<div class="r" style="left:1764px;top:1332px;width:160px;height:38px;background:linear-gradient(#a0a0a0,#8a8a8a);border-radius:5px;box-shadow:inset 0 2px 0 #b4b4b4,0 1px 2px rgba(0,0,0,0.3)"></div>
<div class="t" style="left:1776.7px;top:1341.4px;font-size:22.01px;line-height:22.01px;letter-spacing:0.00px;color:#fff;transform:scaleX(1.0758);transform-origin:0 0;">Show details</div>
<div class="t" style="left:1765.0px;top:1447.7px;font-size:31.08px;line-height:31.08px;letter-spacing:-0.99px;color:#666;font-weight:bold;-webkit-text-stroke:0;">Post via Email</div>
<svg style="left:1764px;top:1509px" width="23" height="19" viewBox="0 0 23 19"><path d="M1 1 H22 V18 H1 Z M1 1 L11.5 10 L22 1" fill="none" stroke="#cfcfcf" stroke-width="1.8"/></svg>
<div class="t" style="left:1796.5px;top:1507.2px;font-size:20.29px;line-height:20.29px;letter-spacing:0.91px;color:#234d92;transform:scaleX(1.1000);transform-origin:0 0;">shazam@get-traction.com</div>
</body></html>
